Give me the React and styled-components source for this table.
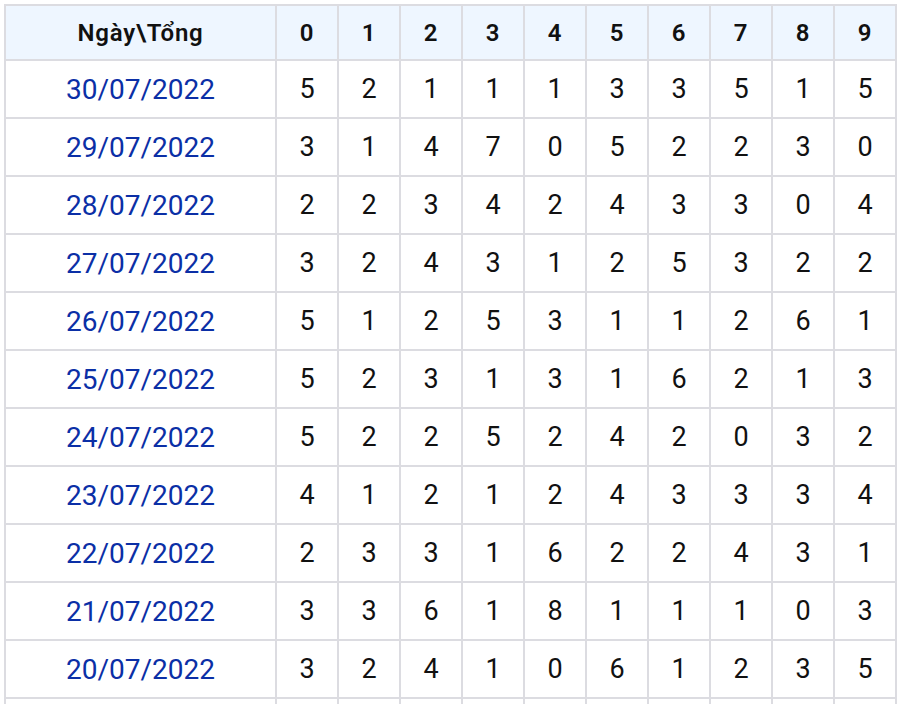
import React from 'react';
import styled, { createGlobalStyle } from 'styled-components';

const GlobalStyle = createGlobalStyle`
    html, body {
        margin: 0;
        padding: 0;
        background: #ffffff;
    }
    body {
        font-family: Roboto, 'Liberation Sans', Arial, sans-serif;
    }
`;

const rows = [
    { date: '30/07/2022', values: [5, 2, 1, 1, 1, 3, 3, 5, 1, 5] },
    { date: '29/07/2022', values: [3, 1, 4, 7, 0, 5, 2, 2, 3, 0] },
    { date: '28/07/2022', values: [2, 2, 3, 4, 2, 4, 3, 3, 0, 4] },
    { date: '27/07/2022', values: [3, 2, 4, 3, 1, 2, 5, 3, 2, 2] },
    { date: '26/07/2022', values: [5, 1, 2, 5, 3, 1, 1, 2, 6, 1] },
    { date: '25/07/2022', values: [5, 2, 3, 1, 3, 1, 6, 2, 1, 3] },
    { date: '24/07/2022', values: [5, 2, 2, 5, 2, 4, 2, 0, 3, 2] },
    { date: '23/07/2022', values: [4, 1, 2, 1, 2, 4, 3, 3, 3, 4] },
    { date: '22/07/2022', values: [2, 3, 3, 1, 6, 2, 2, 4, 3, 1] },
    { date: '21/07/2022', values: [3, 3, 6, 1, 8, 1, 1, 1, 0, 3] },
    { date: '20/07/2022', values: [3, 2, 4, 1, 0, 6, 1, 2, 3, 5] },
    { date: '19/07/2022', values: [4, 2, 1, 3, 2, 5, 1, 3, 2, 4] },
];

function App() {
    return (
        <>
            <GlobalStyle />
            <Wrap>
                <Table>
                    <colgroup>
                        <col style={{ width: 271 }} />
                        {Array.from({ length: 10 }).map((_, i) => (
                            <col key={i} style={{ width: 62 }} />
                        ))}
                    </colgroup>
                    <thead>
                        <tr>
                            <HeadCell>Ngày\Tổng</HeadCell>
                            {Array.from({ length: 10 }).map((_, i) => (
                                <HeadCell key={i}>{i}</HeadCell>
                            ))}
                        </tr>
                    </thead>
                    <tbody>
                        {rows.map((row) => (
                            <tr key={row.date}>
                                <DateCell>{row.date}</DateCell>
                                {row.values.map((v, i) => (
                                    <Cell key={i}>{v}</Cell>
                                ))}
                            </tr>
                        ))}
                    </tbody>
                </Table>
            </Wrap>
        </>
    );
}

export default App;

const Wrap = styled.div`
    padding: 4px 2px 4px 4px;
`;

const Table = styled.table`
    width: 892px;
    table-layout: fixed;
    border-collapse: collapse;
    border: 2px solid #dcdce1;
`;

const HeadCell = styled.th`
    height: 53px;
    padding: 0;
    background: #eef6ff;
    border: 2px solid #dcdce1;
    color: #111111;
    font-size: 24px;
    font-weight: 600;
    letter-spacing: 0.8px;
    text-align: center;
    vertical-align: middle;
`;

const Cell = styled.td`
    height: 56px;
    padding: 0;
    border: 2px solid #dcdce1;
    color: #111111;
    font-size: 27px;
    text-align: center;
    vertical-align: middle;
`;

const DateCell = styled(Cell)`
    color: #0b2fa6;
    font-size: 28px;
`;
